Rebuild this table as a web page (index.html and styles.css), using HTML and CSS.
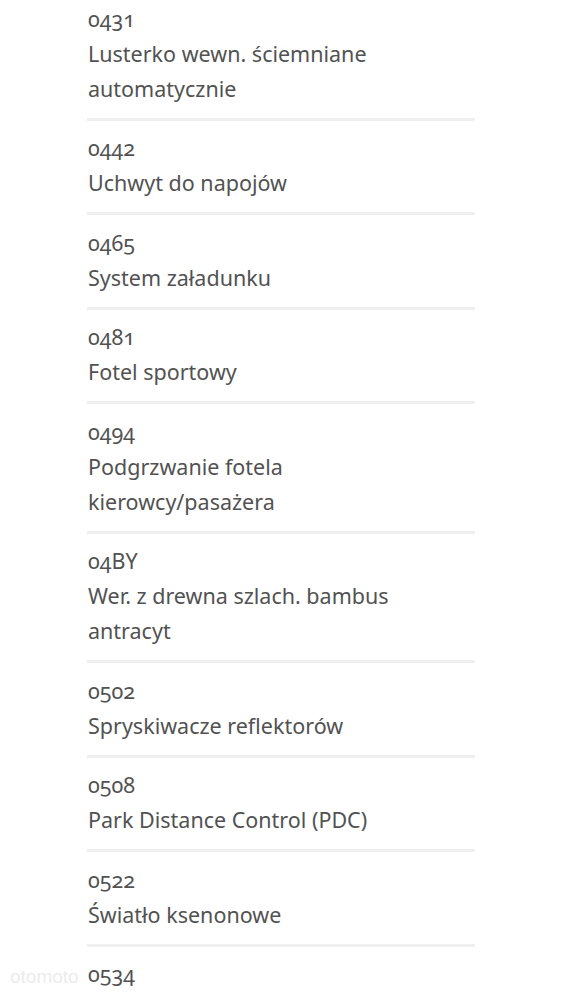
FILE: index.html
```html
<!DOCTYPE html>
<html lang="pl">
<head>
  <meta charset="UTF-8">
  <title>Wyposażenie</title>
  <link rel="stylesheet" href="styles.css">
</head>
<body>

<!-- lista wyposażenia -->
<ul class="equipment">
  <li class="item"><span class="code">0431</span><span class="name">Lusterko wewn. ściemniane automatycznie</span></li>
  <li class="item"><span class="code">0442</span><span class="name">Uchwyt do napojów</span></li>
  <li class="item"><span class="code">0465</span><span class="name">System załadunku</span></li>
  <li class="item"><span class="code">0481</span><span class="name">Fotel sportowy</span></li>
  <li class="item"><span class="code">0494</span><span class="name">Podgrzwanie fotela kierowcy/pasażera</span></li>
  <li class="item"><span class="code">04BY</span><span class="name">Wer. z drewna szlach. bambus antracyt</span></li>
  <li class="item"><span class="code">0502</span><span class="name">Spryskiwacze reflektorów</span></li>
  <li class="item"><span class="code">0508</span><span class="name">Park Distance Control (PDC)</span></li>
  <li class="item"><span class="code">0522</span><span class="name">Światło ksenonowe</span></li>
  <li class="item"><span class="code">0534</span></li>
</ul>

<div class="watermark">otomoto</div>

</body>
</html>
```

FILE: styles.css
```css
* { box-sizing: border-box; }

body {
  margin: 0;
  background: #fff;
  font-family: "Noto Sans", "Open Sans", sans-serif;
  color: #525252;
  overflow: hidden;
  height: 998px;
}

.equipment {
  list-style: none;
  margin: -9px 0 0 0;
  padding: 0 0 0 87px;
  width: 475px;
}

.item {
  padding: 9.5px 0 12px 1px;
  border-bottom: 3px solid #efefef;
}

.code,
.name {
  display: block;
  font-size: 21.5px;
  line-height: 35px;
  font-variant-numeric: oldstyle-nums;
}

.watermark {
  position: absolute;
  left: 10px;
  top: 966px;
  font-size: 19px;
  color: #ececec;
  font-family: "Liberation Sans", sans-serif;
}
```
